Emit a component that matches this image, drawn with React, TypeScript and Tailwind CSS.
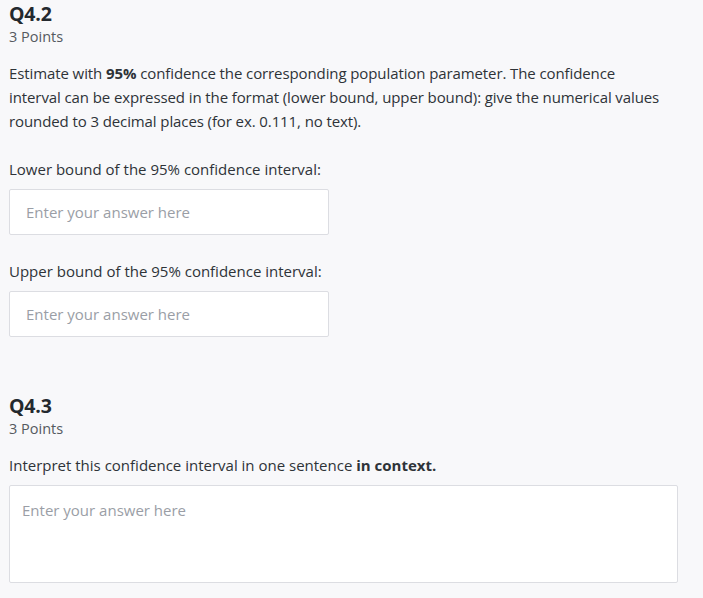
import React from "react";

const font = { fontFamily: "'Open Sans', Lato, sans-serif" };

function Question({ num, points, children }: { num: string; points: number; children: React.ReactNode }) {
  return (
    <div>
      <h2 className="text-[19.5px] font-bold text-[#24292e] leading-[24px] tracking-[-0.2px]">{num}</h2>
      <p className="mt-[1px] text-[14.5px] text-[#555a60] leading-[20px]">{points} Points</p>
      {children}
    </div>
  );
}

export default function App() {
  return (
    <div className="min-h-screen w-full bg-[#f8f8fa] text-[#2e3338] px-[9px] pt-[2px]" style={font}>
      <Question num="Q4.2" points={3}>
        <p className="mt-[14px] text-[15px] leading-[24px] tracking-[-0.1px]">
          Estimate with <b>95%</b> confidence the corresponding population parameter. The confidence
          <br />
          interval can be expressed in the format (lower bound, upper bound): give the numerical values
          <br />
          rounded to 3 decimal places (for ex. 0.111, no text).
        </p>

        <p className="mt-[24px] text-[15px] leading-[24px]">Lower bound of the 95% confidence interval:</p>
        <input
          className="mt-[8px] block w-[320px] h-[46px] bg-white border border-[#dcdde2] rounded-[2px] px-[16px] text-[15px] placeholder:text-[#9a9ea6] outline-none"
          placeholder="Enter your answer here"
        />

        <p className="mt-[24px] text-[15px] leading-[24px]">Upper bound of the 95% confidence interval:</p>
        <input
          className="mt-[8px] block w-[320px] h-[46px] bg-white border border-[#dcdde2] rounded-[2px] px-[16px] text-[15px] placeholder:text-[#9a9ea6] outline-none"
          placeholder="Enter your answer here"
        />
      </Question>

      <div className="mt-[57px]">
        <Question num="Q4.3" points={3}>
          <p className="mt-[14px] text-[15px] leading-[24px]">
            Interpret this confidence interval in one sentence <b>in context.</b>
          </p>
          <textarea
            className="mt-[8px] block w-[669px] h-[98px] resize-none bg-white border border-[#dcdde2] rounded-[2px] px-[12px] py-[14px] text-[15px] leading-[20px] placeholder:text-[#9a9ea6] outline-none"
            placeholder="Enter your answer here"
          />
        </Question>
      </div>
    </div>
  );
}
